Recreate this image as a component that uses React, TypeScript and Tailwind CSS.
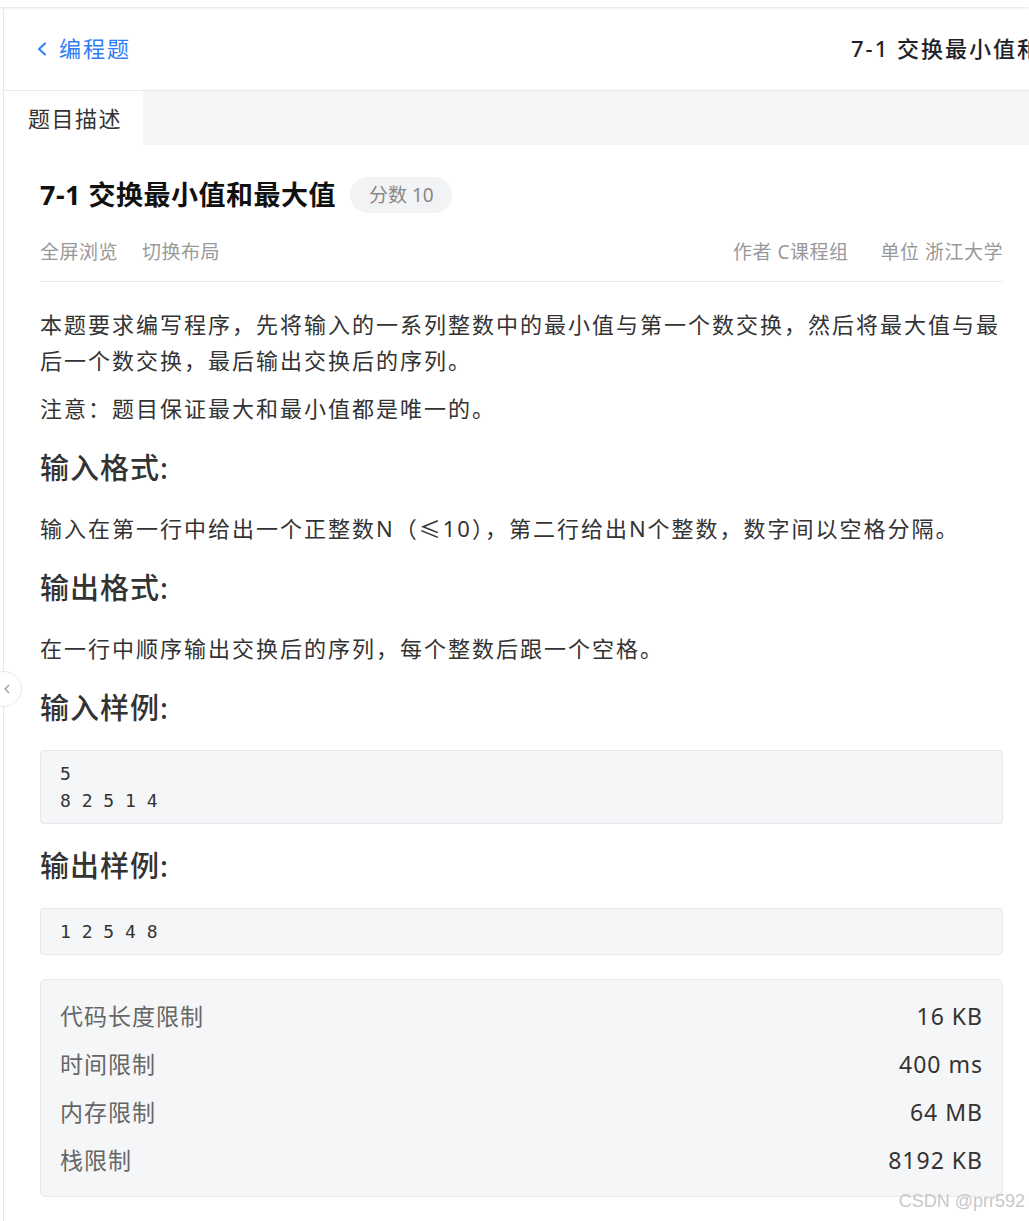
import React from 'react';

const LIMITS = [
  { label: '代码长度限制', value: '16 KB' },
  { label: '时间限制', value: '400 ms' },
  { label: '内存限制', value: '64 MB' },
  { label: '栈限制', value: '8192 KB' },
];

const Heading: React.FC<{ children: React.ReactNode }> = ({ children }) => (
  <h3 className="mt-5 text-[29px] leading-[44px] tracking-[1px] font-medium text-[#333]">{children}</h3>
);

const Para: React.FC<{ children: React.ReactNode; className?: string }> = ({ children, className = '' }) => (
  <p className={`text-[22px] leading-[36px] tracking-[2px] text-[#333] ${className}`}>{children}</p>
);

const CodeBlock: React.FC<{ lines: string[] }> = ({ lines }) => (
  <pre className="mt-5 rounded-[4px] border border-[#e6e8eb] bg-[#f5f6f8] px-[19px] py-[9px] text-[18px] leading-[27px] text-[#333] font-[family-name:'DejaVu_Sans_Mono',monospace]">
    {lines.join('\n')}
  </pre>
);

const App: React.FC = () => {
  return (
    <div className="relative min-h-[1221px] w-[1029px] overflow-hidden bg-white font-[family-name:'Noto_Sans','Noto_Sans_CJK_SC',sans-serif]">
      {/* top strip */}
      <div className="h-[7px] bg-white shadow-[0_1px_3px_rgba(0,0,0,0.12)]" />

      <div className="ml-[3px] min-h-[1214px] border-l border-[#e8e8e8]">
        {/* header */}
        <div className="flex h-[84px] items-center border-b border-[#ebebeb]">
          <div className="flex items-center pl-[32px] text-[#2f7cf6]">
            <svg width="12" height="14" viewBox="0 0 12 14" fill="none" className="mr-[11px]">
              <path d="M9 1.5 L3 7 L9 12.5" stroke="currentColor" strokeWidth="2" strokeLinecap="round" strokeLinejoin="round" />
            </svg>
            <span className="text-[22px] tracking-[2px]">编程题</span>
          </div>
          <div className="ml-[720px] min-w-0 flex-1 overflow-hidden whitespace-nowrap text-[22px] font-medium tracking-[2px] text-[#1f2329]">
            7-1 交换最小值和最大值
          </div>
        </div>

        {/* tabs */}
        <div className="flex h-[54px] bg-[#f5f6f8]">
          <div className="flex w-[139px] items-center bg-white pl-[24px] text-[22px] tracking-[1.5px] text-[#333]">题目描述</div>
        </div>

        {/* content */}
        <div className="pl-[36px] pr-[26px] pt-[32px] pb-[24px]">
          <div className="flex h-[36px] items-center">
            <h1 className="text-[27px] font-bold tracking-[0.5px] text-[#111]">7-1 交换最小值和最大值</h1>
            <span className="ml-[14px] flex h-[36px] items-center rounded-full bg-[#f2f3f5] pl-[19px] pr-[18px] text-[19px] text-[#888]">
              分数 10
            </span>
          </div>

          <div className="mt-[25px] flex items-center justify-between border-b border-[#ebebeb] pb-[15px] text-[19px] leading-[28px] tracking-[0.5px] text-[#999]">
            <div className="flex gap-6">
              <span>全屏浏览</span>
              <span>切换布局</span>
            </div>
            <div className="flex gap-8">
              <span>作者 C课程组</span>
              <span>单位 浙江大学</span>
            </div>
          </div>

          <Para className="mt-6">
            本题要求编写程序，先将输入的一系列整数中的最小值与第一个数交换，然后将最大值与最后一个数交换，最后输出交换后的序列。
          </Para>
          <Para className="mt-3">注意：题目保证最大和最小值都是唯一的。</Para>

          <Heading>输入格式:</Heading>
          <Para className="mt-5">输入在第一行中给出一个正整数N（≤10），第二行给出N个整数，数字间以空格分隔。</Para>

          <Heading>输出格式:</Heading>
          <Para className="mt-5">在一行中顺序输出交换后的序列，每个整数后跟一个空格。</Para>

          <Heading>输入样例:</Heading>
          <CodeBlock lines={['5', '8 2 5 1 4']} />

          <Heading>输出样例:</Heading>
          <CodeBlock lines={['1 2 5 4 8']} />

          <div className="mt-6 rounded-[6px] border border-[#e6e8eb] bg-[#f5f6f8] px-[19px] py-[12px]">
            {LIMITS.map((item) => (
              <div key={item.label} className="flex h-[48px] items-center justify-between text-[23px] tracking-[1px]">
                <span className="text-[#666]">{item.label}</span>
                <span className="text-[#333]">{item.value}</span>
              </div>
            ))}
          </div>
        </div>
      </div>

      {/* collapse toggle */}
      <div className="absolute left-[-14px] top-[671px] flex h-[36px] w-[36px] items-center justify-center rounded-full border border-[#e8e8e8] bg-white">
        <svg width="6" height="10" viewBox="0 0 6 10" fill="none" className="ml-[6px]">
          <path d="M5 1 L1 5 L5 9" stroke="#999" strokeWidth="1.2" />
        </svg>
      </div>

      {/* watermark */}
      <div className="absolute bottom-[6px] right-[4px] text-[18px] text-[#c8c8c8] font-[family-name:'Liberation_Sans',sans-serif]">
        CSDN @prr592
      </div>
    </div>
  );
};

export default App;
